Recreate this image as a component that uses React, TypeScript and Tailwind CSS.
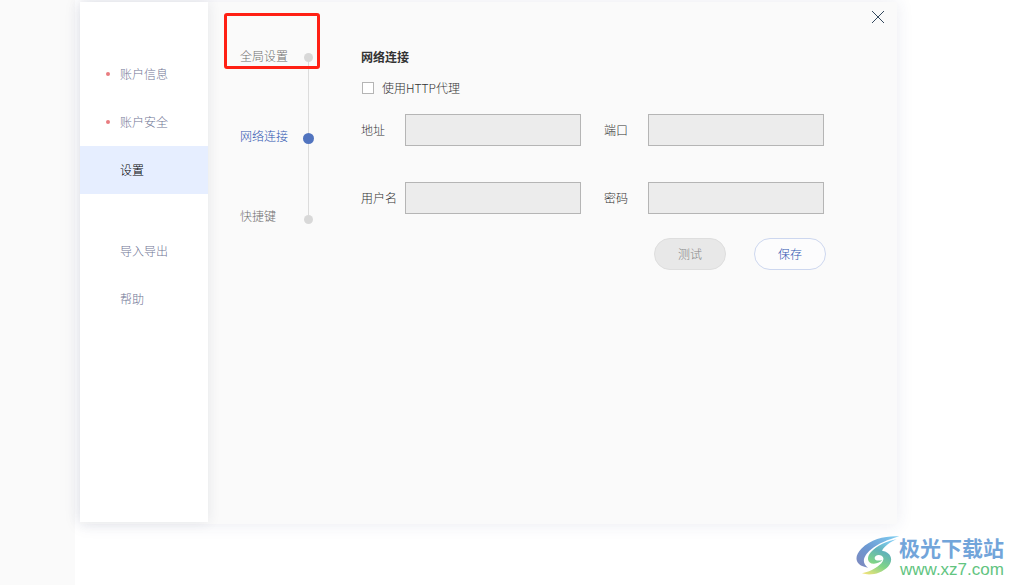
import React from "react";

type MenuItem = { label: string; dot?: boolean; active?: boolean };

const accountItems: MenuItem[] = [
  { label: "账户信息", dot: true },
  { label: "账户安全", dot: true },
  { label: "设置", active: true },
];

const otherItems: MenuItem[] = [{ label: "导入导出" }, { label: "帮助" }];

function SideItem({ label, dot, active }: MenuItem) {
  return (
    <a
      href="#"
      className={
        active
          ? "flex h-12 items-center bg-[#e6eeff] text-black"
          : "flex h-12 items-center text-[#6f7594]"
      }
    >
      <span className="flex w-10 justify-end pr-[10px]">
        {dot && <span className="size-1 rounded-full bg-[#e97c80]" />}
      </span>
      {label}
    </a>
  );
}

function Field({ id, label, type = "text" }: { id: string; label: string; type?: string }) {
  return (
    <div className="flex h-8 items-center">
      <label htmlFor={id} className="w-11 shrink-0">
        {label}
      </label>
      <input
        id={id}
        type={type}
        disabled
        className="h-8 w-44 border border-[#b5b5b5] bg-[#ececec] px-2"
      />
    </div>
  );
}

function SiteMark() {
  return (
    <div className="absolute right-[11px] bottom-[7px] flex items-end">
      <svg viewBox="0 0 144 132" className="mr-[-3px] h-11 w-12" aria-hidden="true">
        <defs>
          <linearGradient id="swooshTop" x1="0" y1="1" x2="1" y2="0">
            <stop offset="0" stopColor="#8088bd" />
            <stop offset="0.45" stopColor="#6c98d2" />
            <stop offset="1" stopColor="#7fd0f2" />
          </linearGradient>
          <linearGradient id="swooshBottom" x1="0.15" y1="1" x2="0.6" y2="0">
            <stop offset="0" stopColor="#ece27a" />
            <stop offset="0.35" stopColor="#7fd488" />
            <stop offset="0.7" stopColor="#62b3b8" />
            <stop offset="1" stopColor="#7cc8ee" />
          </linearGradient>
        </defs>
        <path
          d="M136 7C95 5 52 14 22 44C-2 68 3 96 42 101C20 86 30 64 50 47C72 29 102 17 136 7Z"
          fill="url(#swooshTop)"
        />
        <path
          d="M128 16C100 20 68 36 51 54C36 70 40 90 60 89C70 89 80 84 85 78C72 82 61 79 62 71C63 64 74 60 83 65C96 73 84 90 64 102C52 110 40 114 24 118C48 126 82 119 102 98C120 79 112 54 84 50C92 36 108 24 128 16Z"
          fill="url(#swooshBottom)"
        />
      </svg>
      <div className="flex flex-col gap-px">
        <span className="text-[21px] leading-[26px] font-bold text-[#72a5da]">极光下载站</span>
        <span className="pl-px font-['Liberation_Sans',sans-serif] text-[17px] leading-[17px] font-normal text-[#62c47f]">
          www.xz7.com
        </span>
      </div>
    </div>
  );
}

export default function App() {
  return (
    <div className="relative min-h-screen overflow-hidden bg-[linear-gradient(to_right,#fafafa_75px,#ffffff_75px)] pt-[2px] pr-[118px] pl-20 font-['Noto_Sans_CJK_SC',sans-serif] text-[12px] leading-4 font-light text-[#333333]">
      <div className="flex min-h-[522px] items-start bg-[#fafafa] shadow-[0_0_16px_rgba(50,60,120,0.1)]">
        <nav className="min-h-[520px] w-32 shrink-0 bg-white pt-12 shadow-[0_0_12px_rgba(40,50,80,0.1)]">
          {accountItems.map((item) => (
            <SideItem key={item.label} {...item} />
          ))}
          <div className="mt-[33px]">
            {otherItems.map((item) => (
              <SideItem key={item.label} {...item} />
            ))}
          </div>
        </nav>

        <nav className="relative flex w-[153px] shrink-0 pt-[46px] pl-8">
          <div className="flex w-[63px] flex-col gap-16 text-[#707070]">
            <a href="#">全局设置</a>
            <a href="#" className="text-[#2f55b0]">
              网络连接
            </a>
            <a href="#">快捷键</a>
          </div>
          <div className="mt-[5px] flex h-[171px] w-[11px] flex-col items-center">
            <span className="size-[9px] shrink-0 rounded-full bg-[#d8d8d8]" />
            <span className="w-px flex-1 bg-[#dcdcdc]" />
            <span className="size-[11px] shrink-0 rounded-full bg-[#5174bf]" />
            <span className="w-px flex-1 bg-[#dcdcdc]" />
            <span className="size-[9px] shrink-0 rounded-full bg-[#d8d8d8]" />
          </div>
          <span className="pointer-events-none absolute top-[11px] left-4 h-14 w-24 rounded-[3px] border-3 border-[#ff2014]" />
        </nav>

        <main className="min-w-0 flex-1 pr-[11px]">
          <div className="flex justify-end pt-[7px]">
            <button type="button" aria-label="关闭" className="flex size-4 items-center justify-center">
              <svg viewBox="0 0 14 14" className="size-[14px]" stroke="#34495e" strokeWidth="1" aria-hidden="true">
                <path d="M1 1L13 13M13 1L1 13" />
              </svg>
            </button>
          </div>

          <form className="w-[465px] pt-6">
            <h2 className="font-bold text-[#333333]">网络连接</h2>
            <label className="mt-[15px] flex h-4 items-center pl-px">
              <input
                type="checkbox"
                className="mr-2 size-3 appearance-none border border-[#b5b5b5] bg-white checked:bg-[#5174bf]"
              />
              使用HTTP代理
            </label>
            <div className="mt-[18px] grid grid-cols-[220px_220px] gap-x-[23px] gap-y-9">
              <Field id="address" label="地址" />
              <Field id="port" label="端口" />
              <Field id="username" label="用户名" />
              <Field id="password" label="密码" type="password" />
            </div>
            <div className="mt-6 flex justify-end gap-7">
              <button
                type="button"
                disabled
                className="h-8 w-[72px] rounded-full border border-[#dedede] bg-[#e8e8e8] text-[#858585]"
              >
                测试
              </button>
              <button
                type="button"
                className="h-8 w-[72px] rounded-full border border-[#cdd7ef] bg-[#fcfcfd] text-[#2f55b0]"
              >
                保存
              </button>
            </div>
          </form>
        </main>
      </div>
      <SiteMark />
    </div>
  );
}
